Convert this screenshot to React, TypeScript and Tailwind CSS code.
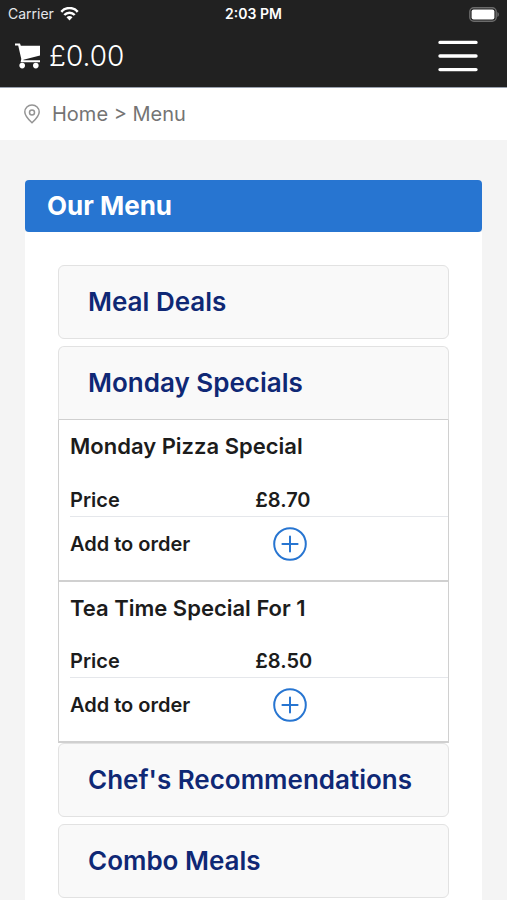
import { useState } from "react";

interface MenuItem {
  name: string;
  price: number;
}

interface MenuCategory {
  title: string;
  items: MenuItem[];
}

const categories: MenuCategory[] = [
  { title: "Meal Deals", items: [] },
  {
    title: "Monday Specials",
    items: [
      { name: "Monday Pizza Special", price: 8.7 },
      { name: "Tea Time Special For 1", price: 8.5 },
    ],
  },
  { title: "Chef's Recommendations", items: [] },
  { title: "Combo Meals", items: [] },
];

const Icons = {
  Wifi: (
    <svg width="19" height="14" viewBox="0 0 18 14" fill="none" stroke="currentColor" strokeWidth="2.5" aria-hidden="true">
      <path d="M0.8 4.8C5.2 -0.2 12.8 -0.2 17.2 4.8" />
      <path d="M3.8 8C6.7 4.9 11.3 4.9 14.2 8" />
      <path d="M9 13.4L6 10.3C7.7 8.7 10.3 8.7 12 10.3Z" fill="currentColor" stroke="none" />
    </svg>
  ),
  Battery: (
    <svg width="30" height="15" viewBox="0 0 30 15" aria-hidden="true">
      <rect x="0.8" y="0.8" width="26.4" height="13.4" rx="4" fill="#212121" stroke="#6b6b6b" strokeWidth="1.4" />
      <rect x="2.6" y="2.6" width="22.8" height="9.8" rx="2" fill="#fff" />
      <path d="M28.4 5V10C30.4 9 30.4 6 28.4 5Z" fill="#6b6b6b" />
    </svg>
  ),
  Cart: (
    <svg width="26" height="26" viewBox="0 0 26 26" fill="currentColor" aria-hidden="true">
      <path d="M0 0.5H5L5.8 2.8H25V12.4L8.4 16.8V17.2H25V19.2H5.6L6.3 15.9L3.2 2.5H0Z" />
      <circle cx="7.2" cy="22.6" r="2.8" />
      <circle cx="20.8" cy="22.6" r="2.8" />
    </svg>
  ),
  Burger: (
    <svg width="40" height="32" viewBox="0 0 40 32" fill="none" stroke="currentColor" strokeWidth="3.4" strokeLinecap="round" aria-hidden="true">
      <path d="M2 2.4H38M2 16H38M2 29.6H38" />
    </svg>
  ),
  Pin: (
    <svg width="16" height="20" viewBox="0 0 16 20" fill="none" stroke="currentColor" strokeWidth="1.5" aria-hidden="true">
      <path d="M8 18.8C5.2 16.2 0.8 12 0.8 8C0.8 4 4 1 8 1C12 1 15.2 4 15.2 8C15.2 12 10.8 16.2 8 18.8Z" />
      <circle cx="8" cy="8.4" r="2.5" />
    </svg>
  ),
  Plus: (
    <svg width="34" height="34" viewBox="0 0 34 34" fill="none" stroke="currentColor" strokeWidth="2" strokeLinecap="round" aria-hidden="true">
      <circle cx="17" cy="17" r="15.8" />
      <path d="M17 9.4V24.6M9.4 17H24.6" />
    </svg>
  ),
};

function ItemCard({ item, onAdd }: { item: MenuItem; onAdd: () => void }) {
  return (
    <article className="border-x border-b-2 border-[#d0d0d0] bg-white pt-2 pb-[19px] pl-[11px]">
      <h3 className="text-[22px] leading-9 font-semibold">{item.name}</h3>
      <table className="mt-5 w-full text-left text-xl">
        <tbody>
          <tr className="h-8 border-b border-gray-200">
            <th className="w-[49%] font-semibold">Price</th>
            <td className="font-semibold">£{item.price.toFixed(2)}</td>
          </tr>
          <tr>
            <th className="pt-2.5 font-semibold">Add to order</th>
            <td className="px-[18px] pt-2.5">
              <button onClick={onAdd} aria-label={`Add ${item.name}`} className="block text-[#2775d1]">
                {Icons.Plus}
              </button>
            </td>
          </tr>
        </tbody>
      </table>
    </article>
  );
}

export default function App() {
  const [open, setOpen] = useState<string | null>("Monday Specials");
  const [total, setTotal] = useState(0);

  return (
    <div className="flex min-h-screen flex-col bg-[#f4f4f4] font-['Inter','Liberation_Sans',sans-serif] text-[#1c1c1c]">
      <header className="border-b border-gray-400 bg-[#212121] text-white">
        <div className="grid h-7 grid-cols-3 items-center px-2 text-sm">
          <div className="flex items-center gap-1.5 text-gray-200">
            Carrier <span className="text-white">{Icons.Wifi}</span>
          </div>
          <div className="text-center font-semibold">2:03 PM</div>
          <div className="flex justify-end">{Icons.Battery}</div>
        </div>
        <div className="flex h-[59px] items-center justify-between pr-[29px] pb-1 pl-[15px]">
          <a href="#basket" className="flex items-center gap-2 text-[28px] font-light">
            {Icons.Cart} £{total.toFixed(2)}
          </a>
          <button aria-label="Open navigation">{Icons.Burger}</button>
        </div>
      </header>

      <nav className="flex h-[52px] items-center gap-3 bg-white pl-6 text-xl text-[#747474]">
        <span className="text-[#949494]">{Icons.Pin}</span>
        <div>
          <a href="#home">Home</a> &gt; <a href="#menu">Menu</a>
        </div>
      </nav>

      <main className="flex flex-1 flex-col px-[25px] pt-10">
        <h1 className="rounded bg-[#2775d1] px-[22px] text-[26px] leading-[52px] font-bold text-white">Our Menu</h1>
        <div className="flex-1 bg-white px-[33px] pt-[33px]">
          {categories.map((category) => {
            const expanded = open === category.title && category.items.length > 0;
            return (
              <section key={category.title} className={expanded ? "" : "mb-[7px] last:mb-0"}>
                <h2>
                  <button
                    onClick={() => setOpen(open === category.title ? null : category.title)}
                    aria-expanded={expanded}
                    className={`h-[74px] w-full border bg-[#f9f9f9] px-[29px] pb-0.5 text-left text-[26px] font-semibold text-[#0f2875] ${expanded ? "rounded-t-md border-[#e2e2e2] border-b-[#d0d0d0]" : "rounded-md border-[#e2e2e2]"}`}
                  >
                    {category.title}
                  </button>
                </h2>
                {expanded &&
                  category.items.map((item) => (
                    <ItemCard key={item.name} item={item} onAdd={() => setTotal(total + item.price)} />
                  ))}
              </section>
            );
          })}
        </div>
      </main>
    </div>
  );
}
